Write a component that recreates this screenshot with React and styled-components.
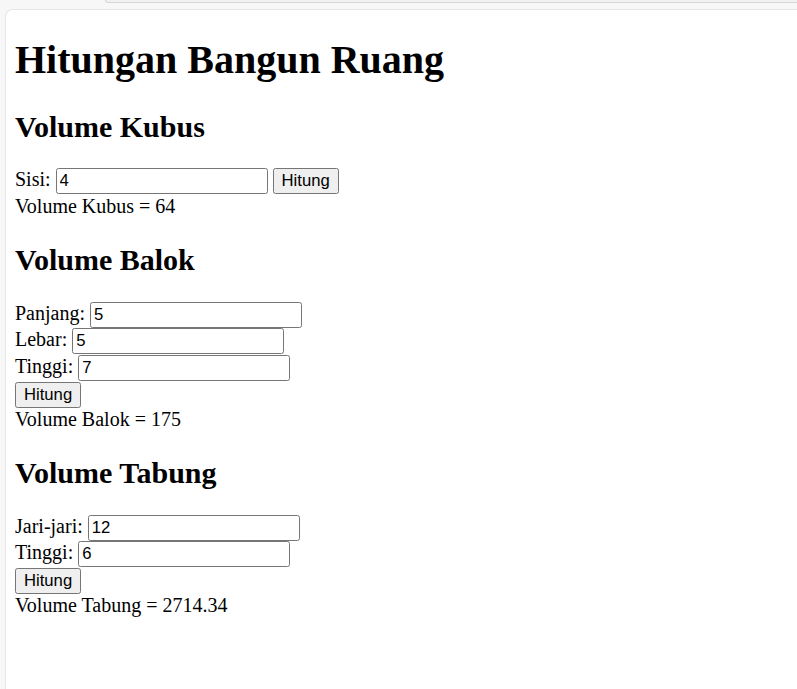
import React from "react";
import styled, { createGlobalStyle } from "styled-components";

const GlobalStyle = createGlobalStyle`
    html, body {
        margin: 0;
        padding: 0;
        background: #f7f7f7;
    }
`;

const Window = styled.div`
    width: 797px;
    height: 689px;
    display: flex;
    flex-direction: column;
    overflow: hidden;
`;

const TopStrip = styled.div`
    height: 9px;
    display: flex;
`;

const AddressTail = styled.div`
    margin-left: 105px;
    flex-grow: 1;
    height: 2px;
    background: #f1f1f1;
    border: 1px solid #d6d6d6;
    border-top: none;
    border-right: none;
    border-bottom-left-radius: 8px;
`;

const Viewport = styled.div`
    flex-grow: 1;
    margin-left: 5px;
    background: #fff;
    border-top: 1px solid #e6e6e6;
    border-left: 1px solid #e6e6e6;
    border-top-left-radius: 8px;
    padding: 0 9px;
    font-family: "Liberation Serif", "Times New Roman", serif;
    font-size: 20px;
    color: #000;
`;

const Title = styled.h1`
    font-size: 40px;
    margin: 25.8px 0 26.8px;
`;

const Heading = styled.h2`
    font-size: 30px;
    margin: 24.9px 0;
`;

const Line = styled.div`
    line-height: normal;
`;

const FieldLine = styled.div`
    height: 26.5px;
    line-height: normal;
`;

const ButtonLine = styled.div`
    height: 26.5px;
    display: flex;
    align-items: flex-end;
`;

const Field = styled.input`
    box-sizing: border-box;
    width: 212px;
    height: 26px;
    padding: 1px 3px;
    border: 1px solid #767676;
    border-radius: 2.5px;
    font-family: "Liberation Sans", Arial, sans-serif;
    font-size: 16.67px;
    color: #000;
    vertical-align: baseline;
`;

const Button = styled.button`
    box-sizing: border-box;
    height: 26px;
    margin: 0;
    padding: 1px 8px;
    background: #efefef;
    border: 1px solid #767676;
    border-radius: 2.5px;
    font-family: "Liberation Sans", Arial, sans-serif;
    font-size: 16.67px;
    color: #000;
`;

const Labeled = ({ label, value }) => (
    <FieldLine>
        {label}: <Field defaultValue={value} />
    </FieldLine>
);

export default () => {
    return (
        <>
            <GlobalStyle />
            <Window>
                <TopStrip>
                    <AddressTail />
                </TopStrip>
                <Viewport>
                    <Title>Hitungan Bangun Ruang</Title>

                    <Heading>Volume Kubus</Heading>
                    <FieldLine>
                        Sisi: <Field defaultValue="4" /> <Button>Hitung</Button>
                    </FieldLine>
                    <Line>Volume Kubus = 64</Line>

                    <Heading>Volume Balok</Heading>
                    <Labeled label="Panjang" value="5" />
                    <Labeled label="Lebar" value="5" />
                    <Labeled label="Tinggi" value="7" />
                    <ButtonLine>
                        <Button>Hitung</Button>
                    </ButtonLine>
                    <Line>Volume Balok = 175</Line>

                    <Heading>Volume Tabung</Heading>
                    <Labeled label="Jari-jari" value="12" />
                    <Labeled label="Tinggi" value="6" />
                    <ButtonLine>
                        <Button>Hitung</Button>
                    </ButtonLine>
                    <Line>Volume Tabung = 2714.34</Line>
                </Viewport>
            </Window>
        </>
    );
};
